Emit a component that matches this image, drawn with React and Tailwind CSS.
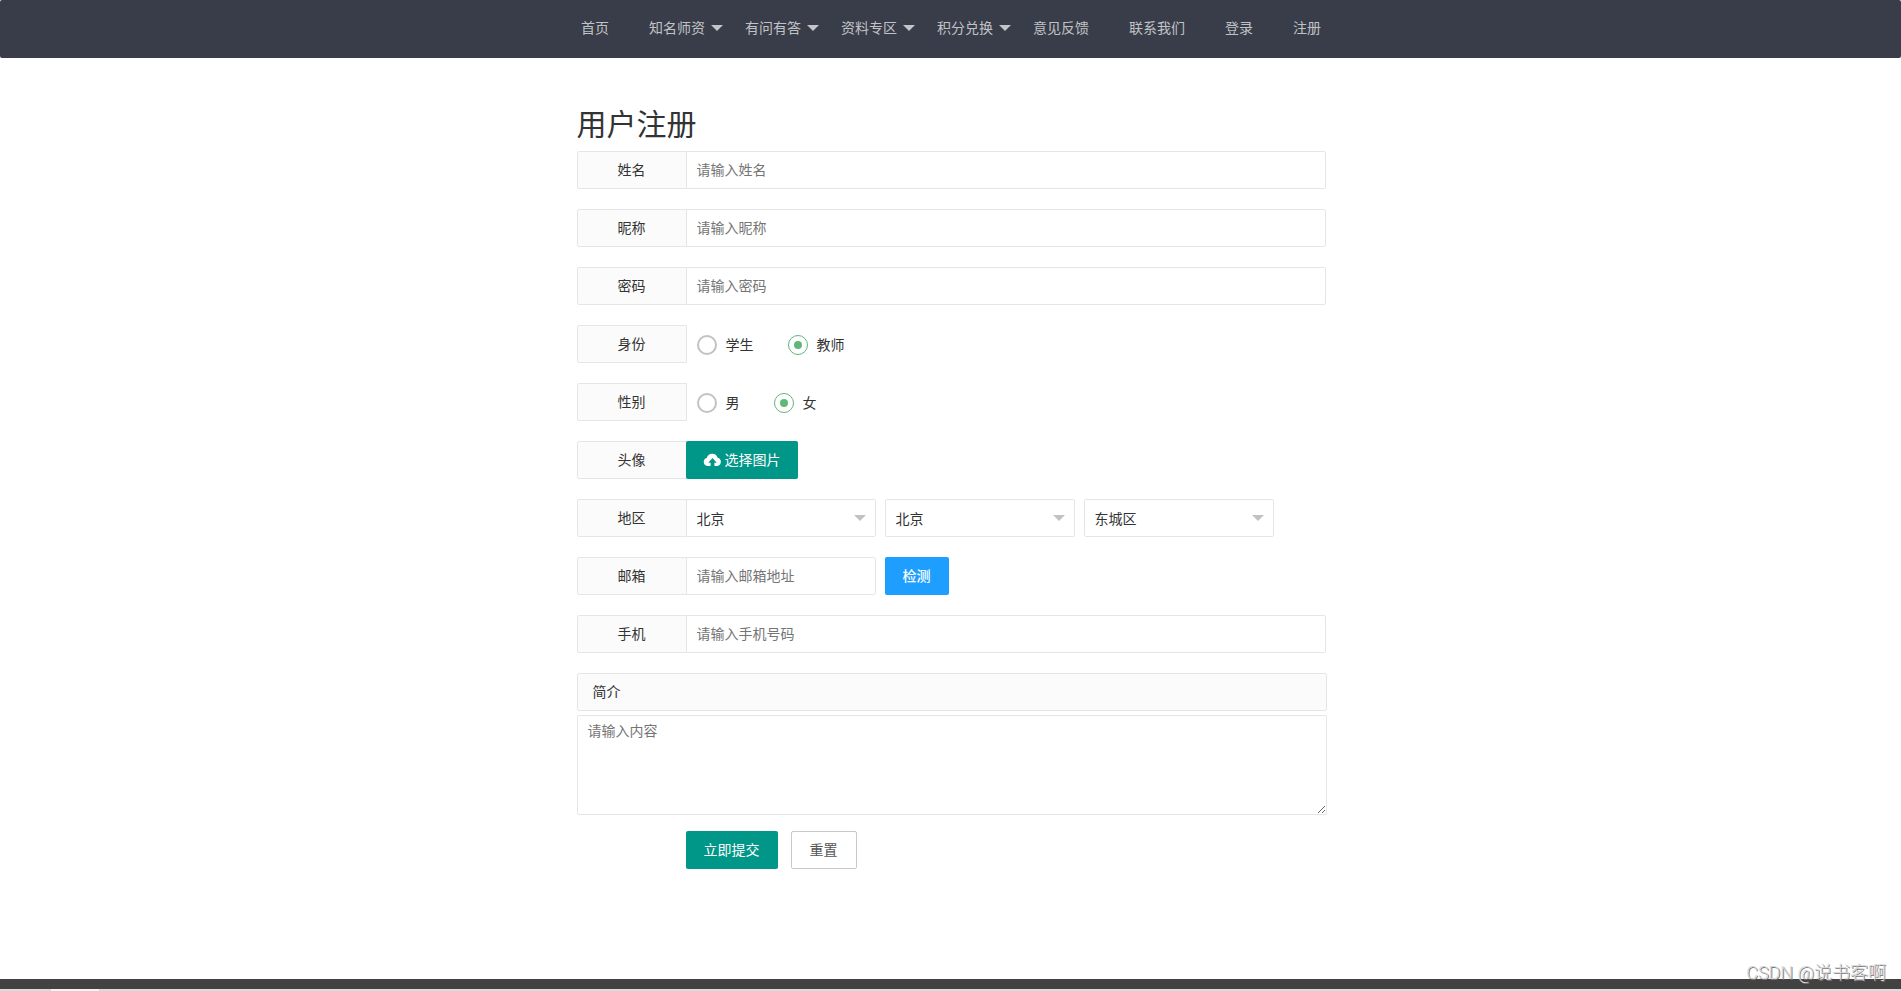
import { useState } from "react"

const navItems = [
  { label: "首页" },
  { label: "知名师资", more: true },
  { label: "有问有答", more: true },
  { label: "资料专区", more: true },
  { label: "积分兑换", more: true },
  { label: "意见反馈" },
  { label: "联系我们" },
  { label: "登录" },
  { label: "注册" },
]

const labelClass =
  "w-[110px] h-[38px] pb-0.5 shrink-0 flex items-center justify-center rounded-l-xs border border-[#e6e6e6] bg-[#fbfbfb]"

const inputClass =
  "h-[38px] min-w-0 -ml-px pl-[10px] pb-0.5 rounded-r-xs border border-[#e6e6e6] bg-white outline-none placeholder:text-[#757575]"

function Caret({ className }) {
  return (
    <svg className={className} width="12" height="6" viewBox="0 0 12 6" fill="currentColor" aria-hidden="true">
      <path d="M0 0h12L6 6z" />
    </svg>
  )
}

function TextRow({ id, label, placeholder, type = "text" }) {
  return (
    <div className="flex pr-px">
      <label htmlFor={id} className={labelClass}>{label}</label>
      <input id={id} type={type} placeholder={placeholder} className={`${inputClass} flex-1`} />
    </div>
  )
}

function RadioRow({ name, label, options, initial }) {
  const [value, setValue] = useState(initial)

  return (
    <div className="flex" role="radiogroup" aria-label={label}>
      <span className={labelClass}>{label}</span>
      <div className="flex items-center gap-[34px] pl-[10px] pt-0.5">
        {options.map((option) => (
          <label key={option} className="flex items-center gap-[9px] cursor-pointer">
            <input
              type="radio"
              name={name}
              value={option}
              checked={value === option}
              onChange={() => setValue(option)}
              className="appearance-none grid place-content-center size-5 rounded-full border-2 border-[#c2c2c2] checked:border checked:border-[#5fb878] checked:before:block checked:before:size-2 checked:before:rounded-full checked:before:bg-[#5fb878]"
            />
            <span className="pb-0.5">{option}</span>
          </label>
        ))}
      </div>
    </div>
  )
}

function SelectBox({ id, label, options, joined }) {
  return (
    <div className={joined ? "relative w-[190px] -ml-px" : "relative w-[190px] ml-[9px]"}>
      <select
        id={id}
        aria-label={label}
        className="appearance-none w-full h-[38px] pl-[10px] pr-[30px] rounded-xs border border-[#e6e6e6] bg-white outline-none"
      >
        {options.map((option) => (
          <option key={option}>{option}</option>
        ))}
      </select>
      <Caret className="absolute right-[10px] top-4 text-[#c2c2c2] pointer-events-none" />
    </div>
  )
}

export default function App() {
  return (
    <div className="min-h-screen flex flex-col bg-white text-sm text-[#333] font-['Noto_Sans_CJK_SC',sans-serif]">

      {/* NAV */}
      <nav className="h-[58px] pb-1 pl-px flex items-center justify-center rounded-xs bg-[#393d49] text-white/70">
        {navItems.map((item) => (
          <a key={item.label} href="#" className="relative px-5 hover:text-white">
            {item.label}
            {item.more && <Caret className="absolute right-0.5 top-2" />}
          </a>
        ))}
      </nav>

      {/* FORM */}
      <main className="w-full max-w-[752px] mx-auto pl-0.5 pt-11 pb-10">
        <h1 className="text-[30px] leading-[40px] mb-[9px]">用户注册</h1>

        <form onSubmit={(e) => e.preventDefault()}>
          <div className="flex flex-col gap-5">
            <TextRow id="name" label="姓名" placeholder="请输入姓名" />
            <TextRow id="nickname" label="昵称" placeholder="请输入昵称" />
            <TextRow id="password" label="密码" placeholder="请输入密码" type="password" />

            <RadioRow name="role" label="身份" options={["学生", "教师"]} initial="教师" />
            <RadioRow name="gender" label="性别" options={["男", "女"]} initial="女" />

            <div className="flex">
              <span className={labelClass}>头像</span>
              <button
                type="button"
                className="h-[38px] -ml-px px-[17px] flex items-center gap-[3px] rounded-xs bg-[#009688] text-white"
              >
                <svg width="19" height="14" viewBox="0 0 20 14" fill="none" aria-hidden="true">
                  <path
                    d="M4.6 13.4A4.3 4.3 0 0 1 3.9 5 6 6 0 0 1 15.4 4.6 4.5 4.5 0 0 1 15 13.4h-3V9.8h2.4L10 5 5.6 9.8H8v3.6z"
                    fill="currentColor"
                  />
                </svg>
                <span className="pb-0.5">选择图片</span>
              </button>
            </div>

            <div className="flex">
              <label htmlFor="province" className={labelClass}>地区</label>
              <SelectBox id="province" label="省份" options={["北京"]} joined />
              <SelectBox id="city" label="城市" options={["北京"]} />
              <SelectBox id="district" label="区县" options={["东城区"]} />
            </div>

            <div className="flex">
              <label htmlFor="email" className={labelClass}>邮箱</label>
              <input id="email" type="email" placeholder="请输入邮箱地址" className={`${inputClass} w-[190px]`} />
              <button
                type="button"
                className="h-[38px] ml-[9px] px-[18px] pb-0.5 rounded-xs bg-[#1e9fff] text-white font-medium"
              >
                检测
              </button>
            </div>

            <TextRow id="phone" label="手机" placeholder="请输入手机号码" type="tel" />
          </div>

          <label
            htmlFor="intro"
            className="flex items-center h-[38px] mt-5 px-[15px] pb-0.5 rounded-xs border border-[#e6e6e6] bg-[#fbfbfb]"
          >
            简介
          </label>
          <textarea
            id="intro"
            placeholder="请输入内容"
            className="block w-full h-[100px] mt-1 px-[10px] py-1 resize-y rounded-xs border border-[#e6e6e6] outline-none placeholder:text-[#757575]"
          />

          <div className="flex gap-[13px] mt-4 pl-[109px]">
            <button type="submit" className="h-[38px] px-[18px] pb-0.5 rounded-xs bg-[#009688] text-white">
              立即提交
            </button>
            <button
              type="reset"
              className="h-[38px] px-[18px] pb-0.5 rounded-xs border border-[#c9c9c9] bg-white text-[#555]"
            >
              重置
            </button>
          </div>
        </form>
      </main>

      {/* FOOTER */}
      <footer className="relative mt-auto">
        <div className="h-[10px] bg-[#424242]" />
        <div className="h-0.5 pl-[51px] bg-[#dcdadb]">
          <div className="w-12 h-full bg-[#f5f2f4]" />
        </div>
        <span className="absolute right-[15px] bottom-1.5 text-lg leading-6 text-[#d6d6d6] font-['Roboto','Noto_Sans_CJK_SC',sans-serif] font-light [text-shadow:1px_1px_0_#777]">
          CSDN @说书客啊
        </span>
      </footer>
    </div>
  )
}
